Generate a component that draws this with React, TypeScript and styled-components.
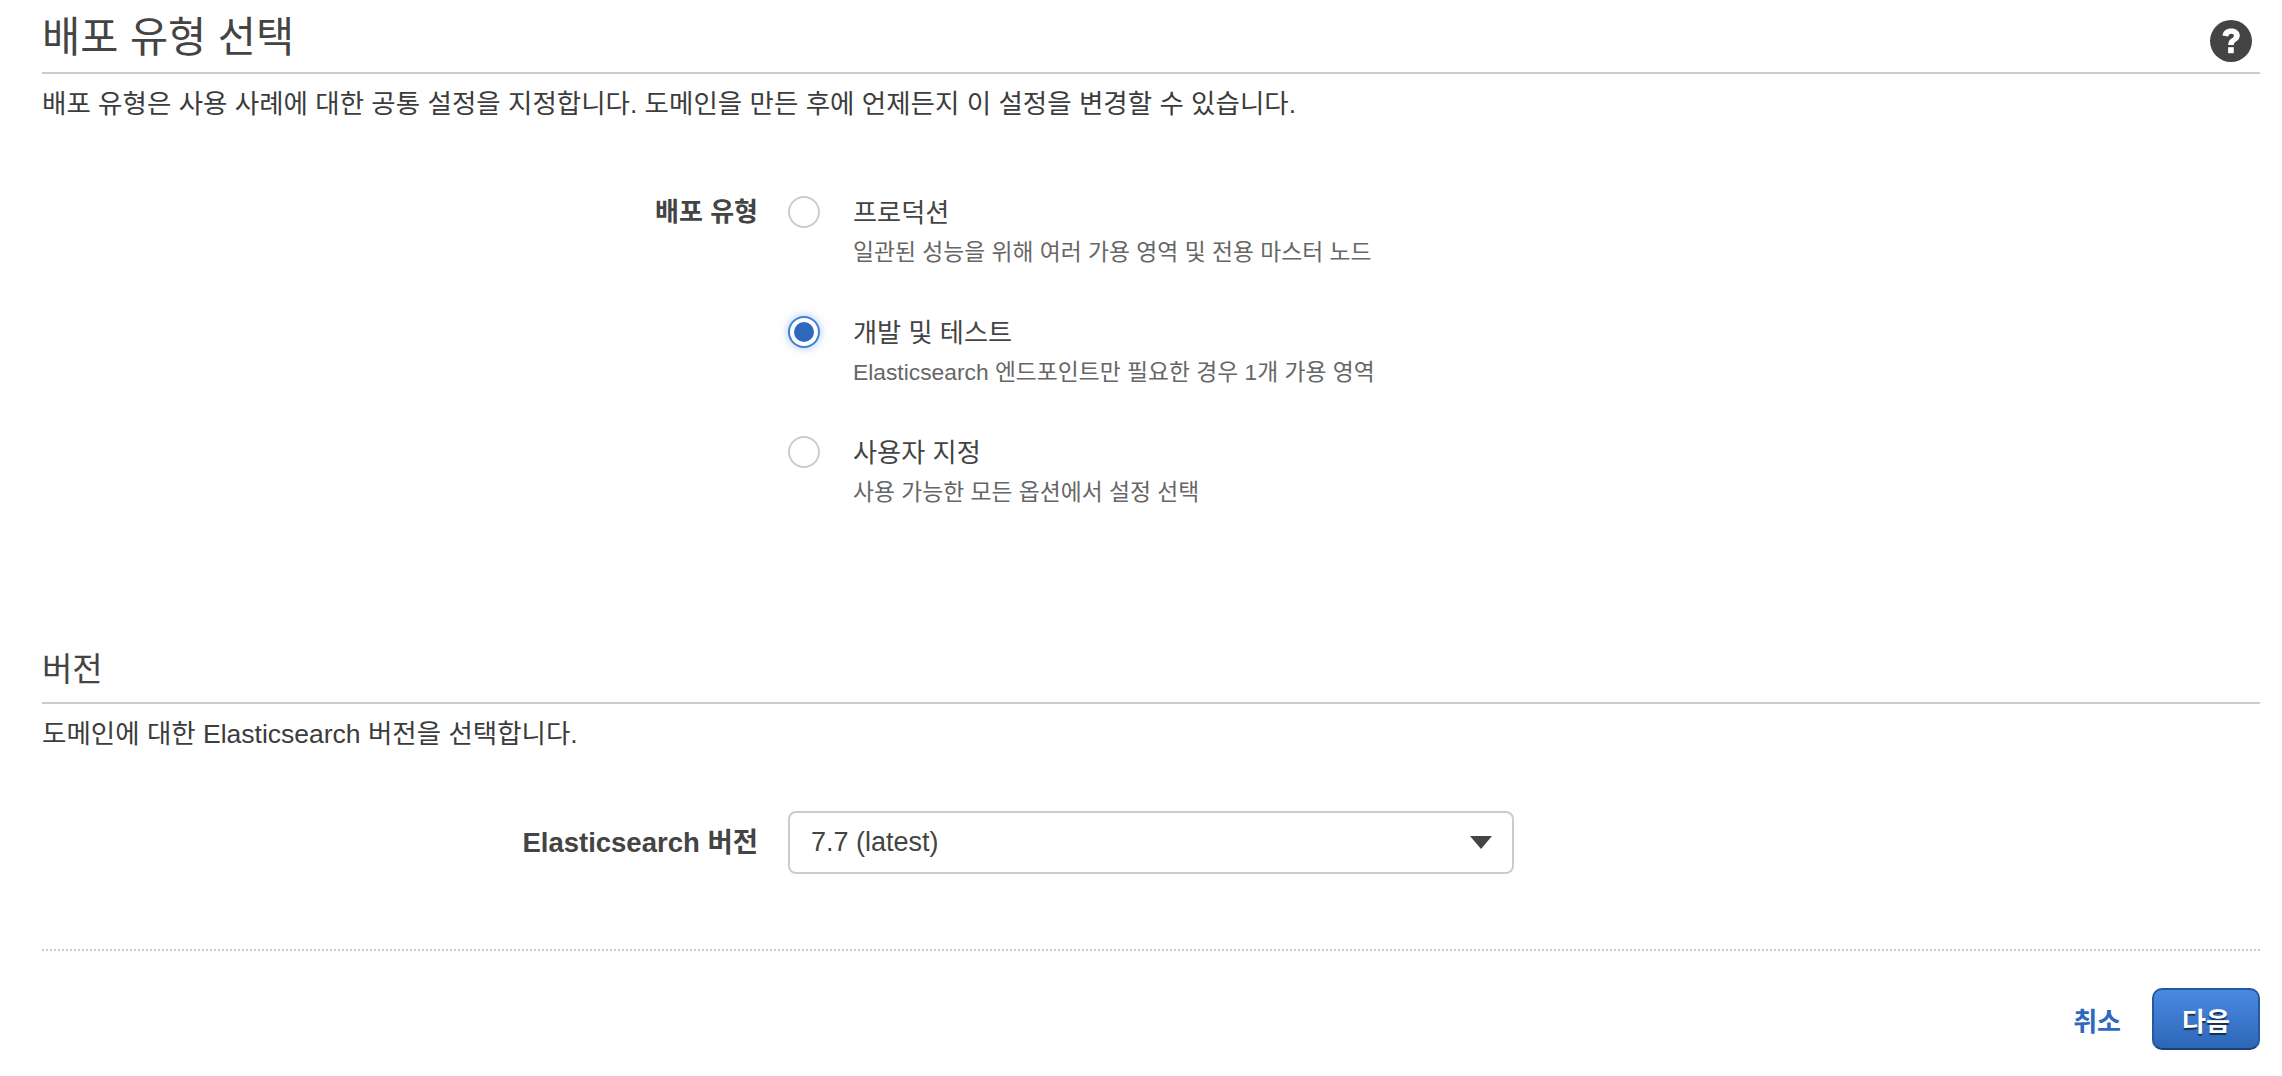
import styled, { createGlobalStyle } from "styled-components";

const GlobalStyle = createGlobalStyle`
  html, body {
    margin: 0;
    padding: 0;
    background: #fff;
  }
  body {
    font-family: "Liberation Sans", "Noto Sans CJK KR", sans-serif;
    color: #444;
  }
`;

const Page = styled.main`
  width: 2282px;
  height: 1076px;
  box-sizing: border-box;
  padding: 0 22px 0 42px;
  overflow: hidden;
`;

const Header = styled.header`
  display: flex;
  align-items: center;
  justify-content: space-between;
  height: 74px;
  box-sizing: border-box;
  padding-right: 8px;
  border-bottom: 2px solid #ccc;
`;

const Title = styled.h1`
  margin: 0;
  padding-top: 4px;
  font-size: 41.5px;
  font-weight: 400;
  line-height: 68px;
  color: #444;
`;

const HelpIcon = styled.svg`
  width: 42px;
  height: 42px;
  display: block;
  margin-top: 10px;
`;

const Description = styled.p`
  margin: 0;
  font-size: 26.5px;
  line-height: 60px;
  color: #3c3c3c;
`;

const FieldRow = styled.div`
  display: grid;
  grid-template-columns: 716px 1fr;
  column-gap: 30px;
`;

const FieldLabel = styled.label<{ $wide?: boolean }>`
  justify-self: end;
  font-size: ${(p) => (p.$wide ? 27.5 : 26)}px;
  font-weight: 700;
  line-height: 38px;
  color: #444;
`;

const RadioList = styled.div`
  display: flex;
  flex-direction: column;
  gap: 35px;
`;

const RadioOption = styled.div`
  display: flex;
  gap: 33px;
  height: 85px;
`;

const RadioCircle = styled.span<{ $checked?: boolean }>`
  flex: none;
  width: 32px;
  height: 32px;
  margin-top: 3px;
  box-sizing: border-box;
  border-radius: 50%;
  background: #fff;
  border: 2px solid ${(p) => (p.$checked ? "#3f7fd8" : "#ccc")};
  box-shadow: ${(p) => (p.$checked ? "0 0 10px rgba(64, 128, 220, 0.45)" : "none")};
  display: flex;
  align-items: center;
  justify-content: center;

  &::after {
    content: "";
    display: ${(p) => (p.$checked ? "block" : "none")};
    width: 20px;
    height: 20px;
    border-radius: 50%;
    background: #2f69bd;
  }
`;

const RadioText = styled.div`
  display: flex;
  flex-direction: column;
  gap: 2px;
`;

const OptionTitle = styled.div`
  padding-top: 1px;
  font-size: 26.2px;
  line-height: 38px;
  color: #444;
`;

const OptionHint = styled.div`
  font-size: 22.8px;
  line-height: 36px;
  color: #666;
`;

const SectionHeader = styled.h2`
  margin: 0;
  height: 63px;
  box-sizing: border-box;
  border-bottom: 2px solid #ccc;
  padding-top: 4px;
  font-size: 33px;
  font-weight: 400;
  line-height: 50px;
  color: #444;
`;

const SelectBox = styled.div`
  width: 726px;
  height: 63px;
  box-sizing: border-box;
  padding: 0 20px 0 21px;
  display: flex;
  align-items: center;
  justify-content: space-between;
  border: 2px solid #ccc;
  border-radius: 8px;
  background: #fff;
  font-size: 27px;
  color: #444;
`;

const Caret = styled.span`
  width: 0;
  height: 0;
  border-left: 11px solid transparent;
  border-right: 11px solid transparent;
  border-top: 13px solid #444;
`;

const Footer = styled.footer`
  margin-top: 75px;
  padding-top: 37px;
  border-top: 2px dotted #ccc;
  display: flex;
  align-items: center;
  justify-content: flex-end;
  gap: 31px;
`;

const CancelLink = styled.a`
  font-size: 26px;
  font-weight: 700;
  color: #2f69bd;
`;

const PrimaryButton = styled.button`
  width: 108px;
  height: 62px;
  box-sizing: border-box;
  border: 2px solid #23599f;
  border-bottom-color: #1b4076;
  border-radius: 10px;
  background: linear-gradient(to bottom, #4a8ae4, #2e66b6);
  color: #fff;
  font-family: inherit;
  font-size: 26px;
  font-weight: 700;
  text-shadow: 0 2px 1px rgba(0, 0, 0, 0.6);
`;

const options = [
  { title: "프로덕션", hint: "일관된 성능을 위해 여러 가용 영역 및 전용 마스터 노드" },
  { title: "개발 및 테스트", hint: "Elasticsearch 엔드포인트만 필요한 경우 1개 가용 영역", checked: true },
  { title: "사용자 지정", hint: "사용 가능한 모든 옵션에서 설정 선택" },
];

const DeploymentSection = styled.section`
  padding-top: 59px;
  height: 507px;
  box-sizing: border-box;
`;

const VersionSection = styled.section``;

const VersionField = styled(FieldRow)`
  margin-top: 47px;
  align-items: center;
`;

export default function App() {
  return (
    <Page>
      <GlobalStyle />
      <Header>
        <Title>배포 유형 선택</Title>
        <HelpIcon viewBox="0 0 42 42">
          <circle cx="21" cy="21" r="21" fill="#444" />
          <path
            d="M12.500 15.500c.500-4.500 4-7 8.700-7 4.800 0 8.600 2.700 8.600 7 0 3.200-1.900 4.700-3.800 6-1.500 1-2.100 1.700-2.100 3.500h-5.700c0-3.400 1.300-5 3.400-6.400 1.300-.9 2.300-1.500 2.300-2.800 0-1.200-1-2-2.600-2-1.700 0-2.800 1-3 2.700z"
            fill="#fff"
          />
          <rect x="18.100" y="27.200" width="5.700" height="6" fill="#fff" />
        </HelpIcon>
      </Header>
      <Description>배포 유형은 사용 사례에 대한 공통 설정을 지정합니다. 도메인을 만든 후에 언제든지 이 설정을 변경할 수 있습니다.</Description>

      <DeploymentSection>
        <FieldRow>
          <FieldLabel>배포 유형</FieldLabel>
          <RadioList>
            {options.map((o) => (
              <RadioOption key={o.title}>
                <RadioCircle $checked={o.checked} />
                <RadioText>
                  <OptionTitle>{o.title}</OptionTitle>
                  <OptionHint>{o.hint}</OptionHint>
                </RadioText>
              </RadioOption>
            ))}
          </RadioList>
        </FieldRow>
      </DeploymentSection>

      <VersionSection>
        <SectionHeader>버전</SectionHeader>
        <Description>도메인에 대한 Elasticsearch 버전을 선택합니다.</Description>
        <VersionField>
          <FieldLabel $wide>Elasticsearch 버전</FieldLabel>
          <SelectBox>
            <span>7.7 (latest)</span>
            <Caret />
          </SelectBox>
        </VersionField>
      </VersionSection>

      <Footer>
        <CancelLink>취소</CancelLink>
        <PrimaryButton>다음</PrimaryButton>
      </Footer>
    </Page>
  );
}
